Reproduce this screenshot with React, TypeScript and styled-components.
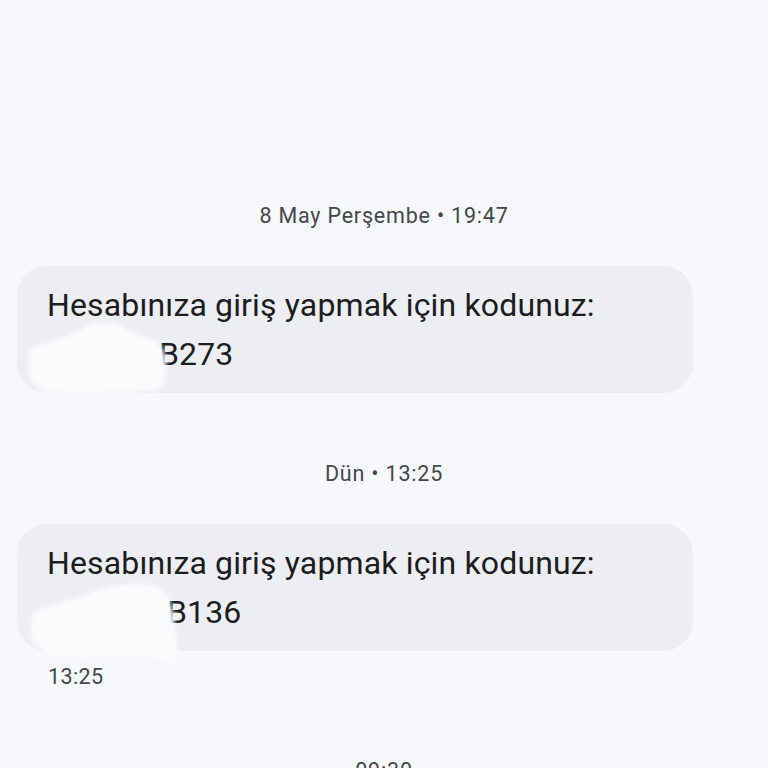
import React from "react";
import styled, { createGlobalStyle } from "styled-components";

const Global = createGlobalStyle`
  html, body { margin: 0; padding: 0; background: #f7f8fc; }
  body { font-family: Roboto, "Noto Sans", sans-serif; -webkit-font-smoothing: antialiased; }
`;

const Screen = styled.div`
  width: 768px;
  height: 768px;
  overflow: hidden;
  background: #f7f8fc;
  display: flex;
  flex-direction: column;
  padding-top: 200px;
  box-sizing: border-box;
`;

const DateHeader = styled.div<{ $gap: number }>`
  font-size: 21.5px;
  line-height: 32px;
  color: #46474b;
  text-align: center;
  margin-bottom: ${(p) => p.$gap}px;
  letter-spacing: 0.8px;
`;

const Bubble = styled.div`
  position: relative;
  margin: 0 75px 0 17px;
  background: #eceef3;
  border-radius: 30px;
  padding: 15px 20px 14px 30px;
  font-size: 32px;
  line-height: 49px;
  color: #1d1d20;
  letter-spacing: 0.15px;
`;

const Line = styled.div<{ $indent?: number }>`
  padding-left: ${(p) => p.$indent ?? 0}px;
`;

const Redaction = styled.svg`
  position: absolute;
  pointer-events: none;
  overflow: visible;
`;

const Stamp = styled.div`
  font-size: 21.5px;
  line-height: 32px;
  color: #46474b;
  padding-left: 48px;
  margin: 10px 0 62px;
  letter-spacing: 0.4px;
`;

const Group = styled.div<{ $gap: number }>`
  margin-bottom: ${(p) => p.$gap}px;
`;

export default function App() {
  return (
    <>
      <Global />
      <Screen>
        <DateHeader $gap={34}>8 May Perşembe • 19:47</DateHeader>
        <Group $gap={65}>
          <Bubble>
            <Line>Hesabınıza giriş yapmak için kodunuz:</Line>
            <Line $indent={112}>B273</Line>
            <Redaction
              width="160"
              height="80"
              viewBox="0 0 160 80"
              style={{ left: 6, top: 52 }}
            >
              <defs>
                <filter id="blur1" x="-20%" y="-20%" width="140%" height="140%">
                  <feGaussianBlur stdDeviation="2" />
                </filter>
              </defs>
              <path
                filter="url(#blur1)"
                fill="#fbfbfd"
                d="M8 30 C 22 24, 45 20, 60 10 C 70 3, 92 3, 102 10 C 112 18, 128 18, 136 26 C 144 34, 144 48, 142 66 C 136 74, 120 74, 90 75 C 60 76, 38 76, 24 74 C 10 70, 5 58, 6 46 Z"
              />
            </Redaction>
          </Bubble>
        </Group>
        <DateHeader $gap={34}>Dün • 13:25</DateHeader>
        <Bubble>
          <Line>Hesabınıza giriş yapmak için kodunuz:</Line>
          <Line $indent={120}>B136</Line>
          <Redaction
            width="170"
            height="90"
            viewBox="0 0 170 90"
            style={{ left: 6, top: 54 }}
          >
            <defs>
              <filter id="blur2" x="-20%" y="-20%" width="140%" height="140%">
                <feGaussianBlur stdDeviation="2" />
              </filter>
            </defs>
            <path
              filter="url(#blur2)"
              fill="#fbfbfd"
              d="M10 34 C 24 26, 48 24, 70 14 C 90 6, 118 4, 134 8 C 146 14, 150 30, 152 48 C 154 62, 156 74, 154 84 C 140 82, 120 76, 96 78 C 70 80, 44 82, 28 76 C 12 70, 6 60, 8 48 Z"
            />
          </Redaction>
        </Bubble>
        <Stamp>13:25</Stamp>
        <DateHeader $gap={0}>09:30</DateHeader>
      </Screen>
    </>
  );
}
